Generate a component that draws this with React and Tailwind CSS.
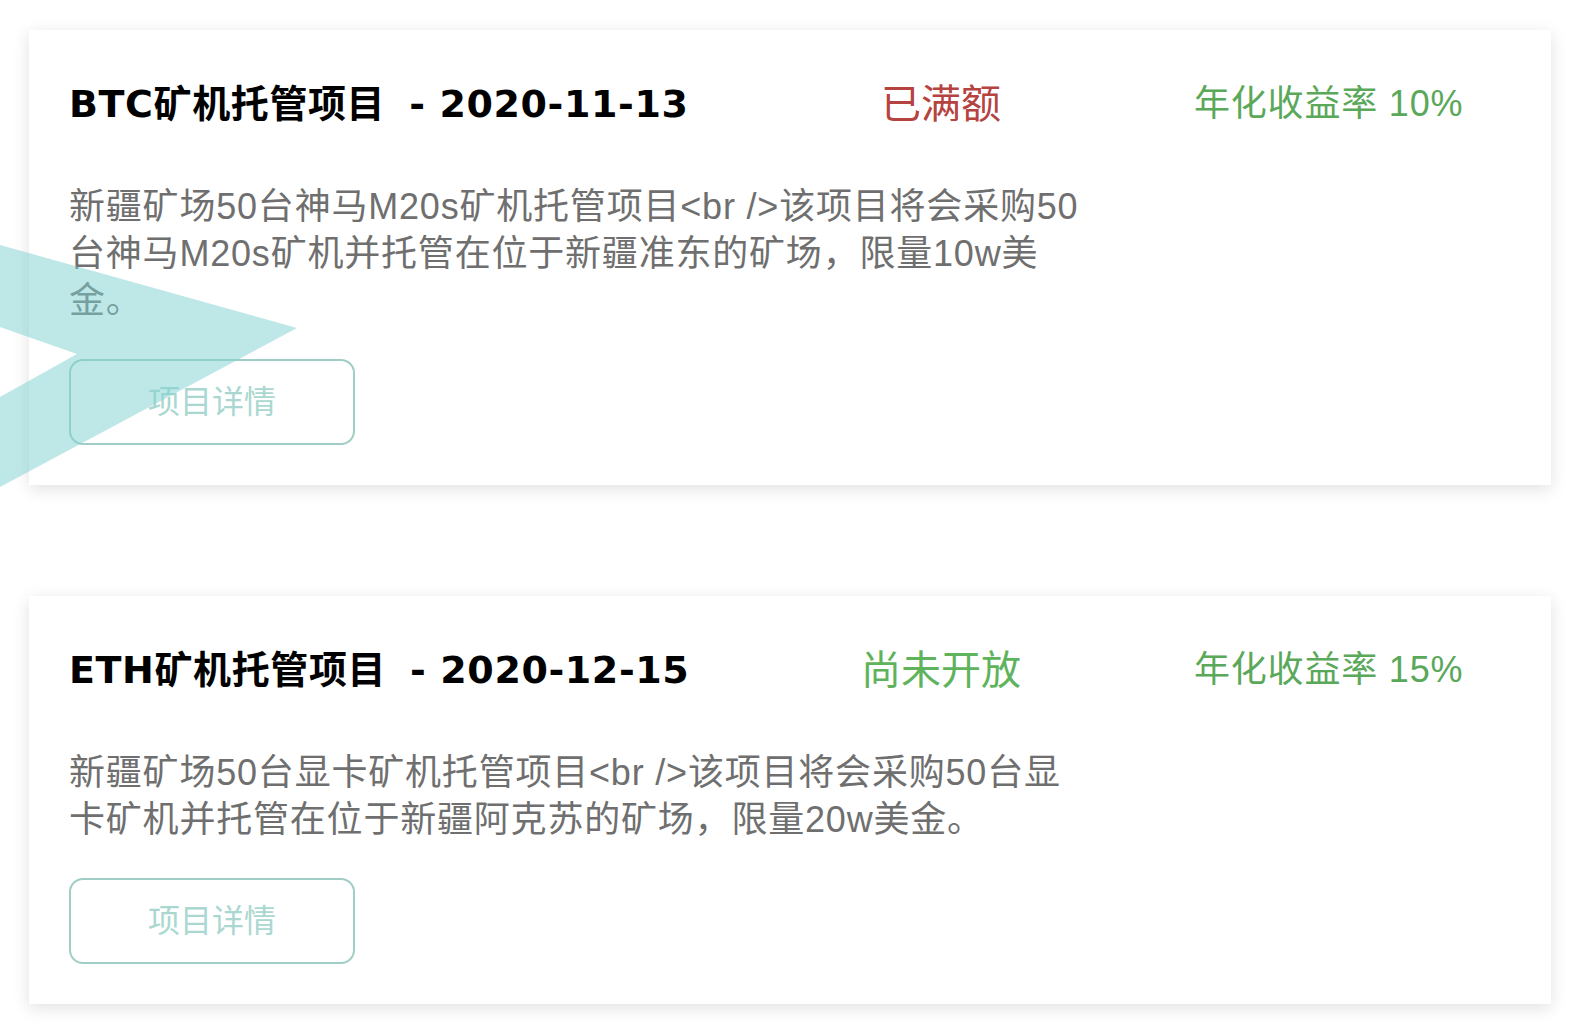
const projects = [
  {
    id: 'btc',
    coin: 'BTC',
    date: '2020-11-13',
    status: 'full',
    rate: '10%',
    desc: '新疆矿场50台神马M20s矿机托管项目<br />该项目将会采购50台神马M20s矿机并托管在位于新疆准东的矿场，限量10w美金。',
  },
  {
    id: 'eth',
    coin: 'ETH',
    date: '2020-12-15',
    status: 'pending',
    rate: '15%',
    desc: '新疆矿场50台显卡矿机托管项目<br />该项目将会采购50台显卡矿机并托管在位于新疆阿克苏的矿场，限量20w美金。',
  },
];

function StatusText({ status }) {
  if (status === 'full') {
    return <span className="text-[#b5433f]">已满额</span>;
  }
  return <span className="text-[#5fb35c]">尚未开放</span>;
}

function ProjectCard({ project, className }) {
  return (
    <div
      className={`bg-white ml-[29px] w-[1522px] pl-10 pt-[52px] pb-[40px] shadow-[0_4px_16px_rgba(0,0,0,0.12)] ${className || ''}`}
    >
      <div className="flex items-center h-[44px]">
        <h2 className="w-[672px] text-[38px] leading-[44px] font-bold tracking-[0.6px] text-black font-['DejaVu_Sans','Noto_Sans_CJK_SC',sans-serif]">
          {project.coin}矿机托管项目<span className="ml-[24px]">- {project.date}</span>
        </h2>
        <div className="w-[400px] text-center text-[40px] leading-[44px] font-['Liberation_Sans','Noto_Sans_CJK_SC',sans-serif]">
          <StatusText status={project.status} />
        </div>
        <div className="ml-[53px] text-[36px] leading-[44px] tracking-[0.8px] text-[#5aa85a] font-['Liberation_Sans','Noto_Sans_CJK_SC',sans-serif]">
          年化收益率 {project.rate}
        </div>
      </div>
      <p className="mt-[57px] w-[1018px] text-[36px] leading-[47px] tracking-[0.8px] text-[#6f6f6f] font-['Liberation_Sans','Noto_Sans_CJK_SC',sans-serif]">
        {project.desc}
      </p>
      <button className="mt-[35px] w-[286px] h-[86px] rounded-[14px] border-2 border-[#a0cec6] text-[32px] text-[#aad8d0] bg-white font-['Liberation_Sans','Noto_Sans_CJK_SC',sans-serif]">
        项目详情
      </button>
    </div>
  );
}

export default function App() {
  return (
    <div className="relative min-h-[1034px] w-[1590px] bg-white pt-[30px] overflow-hidden">
      {projects.map((p, i) => (
        <ProjectCard key={p.id} project={p} className={i > 0 ? 'mt-[111px]' : ''} />
      ))}

      {/* teal swallowtail arrow over the first card */}
      <svg
        className="absolute left-0 top-0 pointer-events-none"
        width="300"
        height="490"
        viewBox="0 0 300 490"
      >
        <polygon
          points="0,245 297,328 0,487 0,397 77,354 0,327"
          fill="#7dcfd1"
          fillOpacity="0.5"
        />
      </svg>
    </div>
  );
}
